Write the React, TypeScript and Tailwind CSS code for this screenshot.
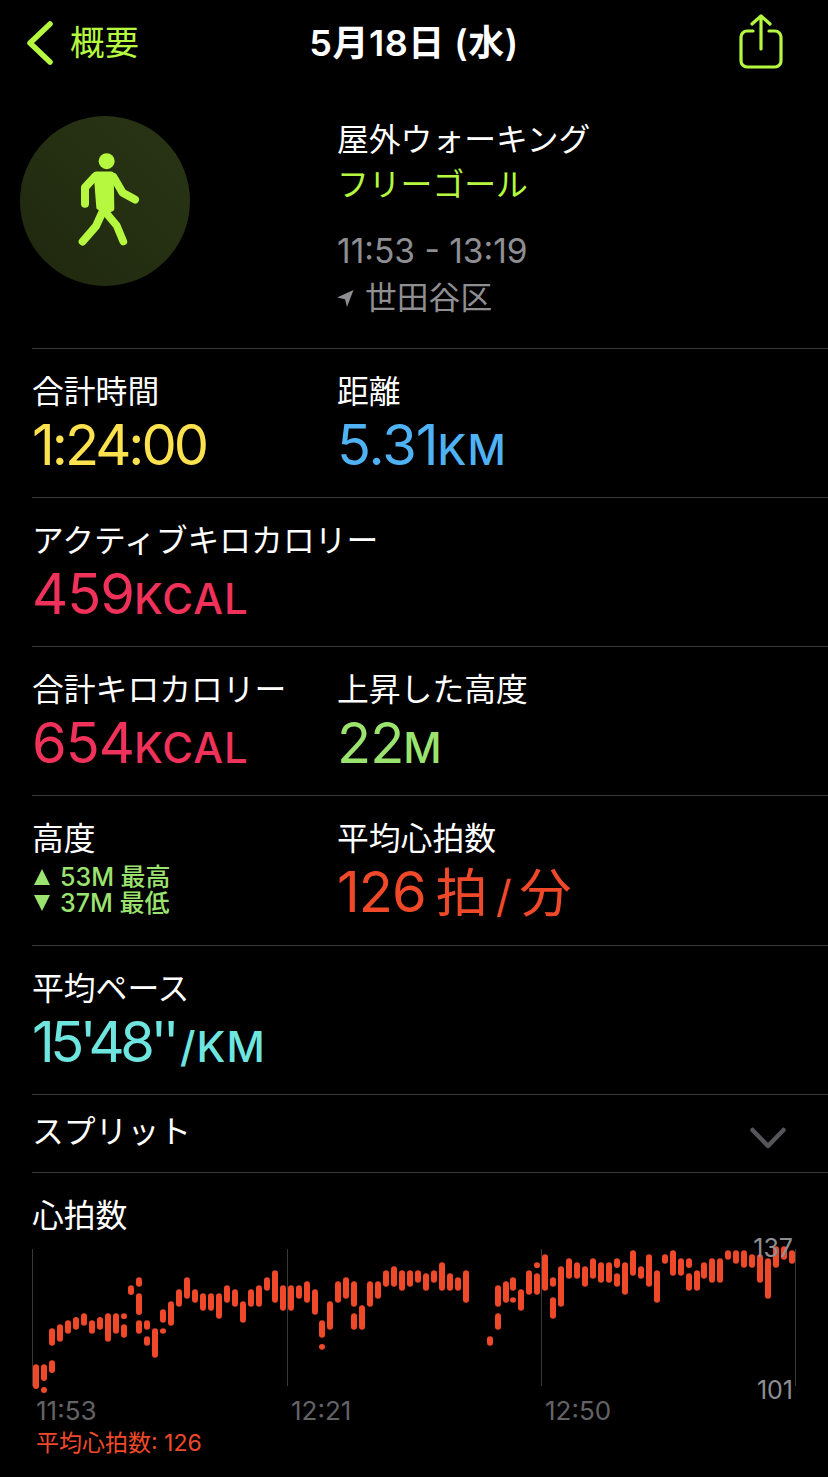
import type { ReactNode } from 'react'

const LIME = '#b5f83f'

const COLS_A: [number, number[]][] = [
  [108, [523, 597]], [132, [523, 573, 591, 609]], [156, [415, 467, 511, 549]], [180, [403, 455]], [204, [391, 431]],
  [228, [381, 419]], [252, [370, 407]], [276, [391, 431]], [300, [381, 419]], [324, [370, 455]], [348, [370, 431]],
  [372, [370, 387, 403, 443]], [393, [286, 315]], [417, [262, 290, 310, 375, 391, 431]], [441, [391, 419, 439, 467]],
  [465, [415, 503]], [489, [358, 398, 415, 431]], [513, [334, 407]], [537, [298, 350]], [561, [262, 326]],
  [585, [298, 338]], [609, [310, 362]], [633, [310, 362]], [657, [310, 386]], [681, [286, 338]], [705, [298, 350]],
  [729, [334, 398]], [753, [298, 350]], [777, [286, 350]], [801, [262, 302]], [825, [241, 338]], [849, [286, 362]],
  [873, [286, 362]], [897, [286, 326]], [921, [274, 338]], [945, [298, 374]], [966, [391, 443, 462, 479]],
  [990, [334, 419]], [1014, [274, 338]], [1038, [262, 326]], [1062, [274, 350, 370, 419]], [1086, [346, 419]],
  [1110, [274, 350]], [1134, [274, 326]], [1158, [241, 290]], [1182, [229, 290]], [1206, [241, 302]], [1230, [241, 290]],
]

const COLS_B: [number, number[]][] = [
  [24, [241, 278]], [48, [250, 302]], [72, [241, 278]], [96, [217, 302]], [120, [250, 302]],
  [144, [262, 302]], [168, [241, 338]], [240, [439, 467]], [264, [286, 350, 370, 419]], [288, [274, 338]],
  [309, [262, 302, 322, 338]], [333, [298, 362]], [357, [241, 314]], [381, [217, 234, 250, 314]], [405, [193, 302]],
  [429, [262, 290, 322, 386]], [453, [229, 350]], [477, [205, 266]], [501, [217, 266]], [525, [229, 290]],
  [549, [205, 266]], [573, [217, 278]], [597, [217, 278]], [621, [205, 234, 250, 290]], [645, [217, 314]],
  [669, [181, 257]], [693, [229, 266]], [717, [193, 290]], [741, [241, 338]], [765, [193, 221]], [789, [181, 257]],
  [813, [205, 257]], [837, [205, 234, 250, 302]], [861, [241, 302]], [882, [217, 266]], [906, [205, 278]],
  [930, [205, 278]], [954, [181, 209]], [978, [181, 221]], [1002, [181, 233]], [1026, [193, 233]], [1050, [193, 278]],
  [1074, [205, 326]], [1098, [169, 233]], [1122, [169, 209]], [1146, [181, 221]],
]

// page coords of the chart box: left 32, top 1249
const bars: { x: number; y: number; h: number }[] = []
function addCols(cols: [number, number[]][], offsetX: number) {
  for (const [zx, seg] of cols) {
    for (let i = 0; i < seg.length; i += 2) {
      bars.push({
        x: offsetX + zx / 3 - 32 - 3,
        y: 1190 + seg[i] / 3 - 1249,
        h: (seg[i + 1] - seg[i]) / 3,
      })
    }
  }
}
addCols(COLS_A, 0)
addCols(COLS_B, 410)

function Unit({ children }: { children: string }) {
  return <span className="text-[42px] font-medium tracking-[1px]">{children}</span>
}

function Metric({ label, children, color }: { label: string; children: ReactNode; color: string }) {
  return (
    <div>
      <div className="whitespace-nowrap text-[31.8px] leading-[38px] text-white">{label}</div>
      <div className={`mt-[2px] whitespace-nowrap text-[56px] leading-[64px] tracking-[-1px] ${color}`}>{children}</div>
    </div>
  )
}

function Row({ children, h = 'h-[149px]' }: { children: ReactNode; h?: string }) {
  return <div className={`grid grid-cols-[305px_1fr] border-t border-[#3a3a3c] pt-[24px] ${h}`}>{children}</div>
}

function HeartChart() {
  return (
    <div className="relative h-[137px] w-[764px]">
      <svg width="764" height="137" className="block overflow-visible">
        <line x1="0.5" y1="0" x2="0.5" y2="137" stroke="#3a3a3c" />
        <line x1="255.5" y1="0" x2="255.5" y2="137" stroke="#3a3a3c" />
        <line x1="509.5" y1="0" x2="509.5" y2="137" stroke="#3a3a3c" />
        <line x1="763.5" y1="0" x2="763.5" y2="137" stroke="#3a3a3c" />
        {bars.map((b, i) => (
          <rect key={i} x={b.x} y={b.y} width="6" height={b.h} rx="3" fill="#f0492a" />
        ))}
      </svg>
      <span className="absolute right-[3px] top-[-16px] text-[25px] leading-[30px] text-[#8e8e93]">137</span>
      <span className="absolute right-[3px] top-[126px] text-[25px] leading-[30px] text-[#8e8e93]">101</span>
    </div>
  )
}

export default function App() {
  return (
    <div
      className="h-[1477px] w-[828px] overflow-hidden bg-black text-white"
      style={{ fontFamily: 'Inter, "Noto Sans CJK JP", sans-serif' }}
    >
      {/* header */}
      <div className="grid h-[88px] grid-cols-[1fr_auto_1fr] items-start">
        <div className="flex items-center pl-[27px] pt-[21px]" style={{ color: LIME }}>
          <svg width="26" height="44" viewBox="0 0 26 44" fill="none" stroke={LIME} strokeWidth="5.5" strokeLinecap="round" strokeLinejoin="round">
            <path d="M23 3 3 22l20 19" />
          </svg>
          <span className="ml-[17px] text-[34.5px] leading-[44px]">概要</span>
        </div>
        <div className="pt-[21px] text-[36px] font-semibold leading-[44px] tracking-[0.5px]">5月18日 (水)</div>
        <div className="flex justify-end pr-[45px] pt-[14px]">
          <svg width="44" height="55" viewBox="0 0 44 55" fill="none" stroke={LIME} strokeWidth="3.2" strokeLinecap="round" strokeLinejoin="round">
            <path d="M14 17H8a6 6 0 0 0-6 6v24a6 6 0 0 0 6 6h28a6 6 0 0 0 6-6V23a6 6 0 0 0-6-6h-6" />
            <path d="M22 35V2M13 10l9-8 9 8" />
          </svg>
        </div>
      </div>

      {/* workout summary */}
      <div className="flex h-[260px] pt-[28px]">
        <div className="ml-[20px] flex h-[170px] w-[170px] items-center justify-center rounded-full bg-gradient-to-tr from-[#1f280e] to-[#2a3515]">
          <svg width="70" height="99" viewBox="180 140 210 296" fill="none" stroke={LIME} strokeLinecap="round" strokeLinejoin="round">
            <circle cx="290" cy="167" r="24" fill={LIME} stroke="none" />
            <path d="M258 205h46l2 105-16 8-24-12z" fill={LIME} strokeWidth="14" />
            <path d="M256 212l-31 34v49" strokeWidth="24" />
            <path d="M310 214l28 48 37 20" strokeWidth="24" />
            <path d="M278 318l-20 44-40 46" strokeWidth="24" />
            <path d="M288 322l32 38 20 48" strokeWidth="23" />
          </svg>
        </div>
        <div className="ml-[147px] whitespace-nowrap text-[31.8px] leading-[44px]">
          <div className="pt-[2px]">屋外ウォーキング</div>
          <div className="pt-[1px]" style={{ color: LIME }}>フリーゴール</div>
          <div className="mt-[22px] text-[33.5px] text-[#8e8e93]">11:53 - 13:19</div>
          <div className="mt-[3px] flex items-center text-[#8e8e93]">
            <svg width="17" height="17" viewBox="0 0 17 17" fill="#8e8e93" className="mr-[11px]">
              <path d="M16.5 0 0 7.5l8 1.7L10 17z" />
            </svg>
            世田谷区
          </div>
        </div>
      </div>

      {/* metrics */}
      <div className="ml-[32px]">
        <Row>
          <Metric label="合計時間" color="text-[#fde24f]">
            <span className="tracking-[-3px]">1:24:00</span>
          </Metric>
          <Metric label="距離" color="text-[#4fb2f5]">
            5.31<Unit>KM</Unit>
          </Metric>
        </Row>
        <Row>
          <Metric label="アクティブキロカロリー" color="text-[#f0325a]">
            459<Unit>KCAL</Unit>
          </Metric>
        </Row>
        <Row>
          <Metric label="合計キロカロリー" color="text-[#f0325a]">
            654<Unit>KCAL</Unit>
          </Metric>
          <Metric label="上昇した高度" color="text-[#9be36f]">
            22<Unit>M</Unit>
          </Metric>
        </Row>
        <Row h="h-[150px]">
          <div>
            <div className="text-[31.8px] leading-[38px]">高度</div>
            <div className="mt-[6px] text-[25px] font-medium leading-[26px] text-[#9be36f]">
              <div className="ml-[2px] flex items-center">
                <svg width="16" height="16" viewBox="0 0 16 16" fill="#9be36f" className="mr-[10px] shrink-0"><path d="M8 0l8 16H0z" /></svg>
                53M 最高
              </div>
              <div className="ml-[2px] flex items-center">
                <svg width="16" height="16" viewBox="0 0 16 16" fill="#9be36f" className="mr-[10px] shrink-0"><path d="M8 16 0 0h16z" /></svg>
                37M 最低
              </div>
            </div>
          </div>
          <Metric label="平均心拍数" color="text-[#f0492a]">
            <span>126</span>
            <span className="ml-[10px] text-[52px]">拍</span>
            <span className="ml-[9px] text-[44px]">/</span>
            <span className="ml-[9px] text-[52px]">分</span>
          </Metric>
        </Row>
        <Row>
          <Metric label="平均ペース" color="text-[#6fe5e0]">
            <span className="tracking-[-4.5px]">15'48''</span>
            <span className="ml-[5px] text-[42px] font-medium tracking-[1px]">/KM</span>
          </Metric>
        </Row>
        <div className="flex h-[78px] items-center justify-between border-t border-[#3a3a3c] pr-[42px]">
          <span className="mb-[4px] text-[31.8px]">スプリット</span>
          <svg width="36" height="22" viewBox="0 0 36 22" fill="none" stroke="#55555a" strokeWidth="4.5" strokeLinecap="round" strokeLinejoin="round" className="mt-[8px]">
            <path d="M2.5 3 18 19 33.5 3" />
          </svg>
        </div>
        <div className="border-t border-[#3a3a3c] pt-[24px]">
          <div className="mb-[14px] text-[31.8px] leading-[38px]">心拍数</div>
          <HeartChart />
          <div className="flex pt-[9px] text-[26px] leading-[32px] text-[#636366]">
            <span className="ml-[4px] w-[255px]">11:53</span>
            <span className="w-[254px]">12:21</span>
            <span>12:50</span>
          </div>
          <div className="ml-[4px] mt-[1px] text-[23px] leading-[30px] text-[#f0492a]">平均心拍数: 126</div>
        </div>
      </div>
    </div>
  )
}
